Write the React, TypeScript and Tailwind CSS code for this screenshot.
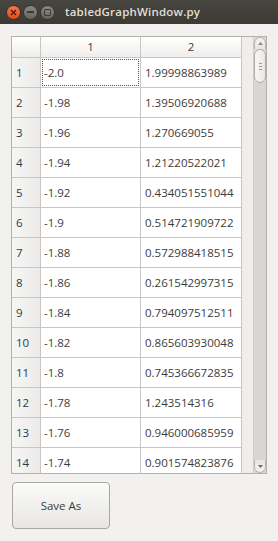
import React from "react";

const rows: [string, string][] = [
    ["-2.0", "1.99998863989"],
    ["-1.98", "1.39506920688"],
    ["-1.96", "1.270669055"],
    ["-1.94", "1.21220522021"],
    ["-1.92", "0.434051551044"],
    ["-1.9", "0.514721909722"],
    ["-1.88", "0.572988418515"],
    ["-1.86", "0.261542997315"],
    ["-1.84", "0.794097512511"],
    ["-1.82", "0.865603930048"],
    ["-1.8", "0.745366672835"],
    ["-1.78", "1.243514316"],
    ["-1.76", "0.946000685959"],
    ["-1.74", "0.901574823876"],
];

const App: React.FC = () => {
    return (
        <div className="w-[278px] h-[541px] bg-[#f2f1f0] flex flex-col overflow-hidden font-['Open_Sans',sans-serif] text-[#3c3c3c]">
            {/* Title bar */}
            <div className="h-[24px] shrink-0 flex items-center bg-gradient-to-b from-[#47463f] to-[#3b3a35] pl-[6px]">
                <div className="w-[15px] h-[15px] rounded-full bg-gradient-to-b from-[#f5784a] to-[#df4a17] border border-[#4a2a1a] flex items-center justify-center">
                    <svg width="7" height="7" viewBox="0 0 7 7">
                        <path d="M1 1 L6 6 M6 1 L1 6" stroke="#4a1e0e" strokeWidth="1.3" />
                    </svg>
                </div>
                <div className="ml-[2px] w-[15px] h-[15px] rounded-full bg-gradient-to-b from-[#8a8984] to-[#65645f] border border-[#35342f] flex items-center justify-center">
                    <div className="w-[7px] h-[2px] bg-[#3c3b37]" />
                </div>
                <div className="ml-[2px] w-[15px] h-[15px] rounded-full bg-gradient-to-b from-[#8a8984] to-[#65645f] border border-[#35342f] flex items-center justify-center">
                    <div className="w-[7px] h-[7px] border-[1.5px] border-[#3c3b37] rounded-[1px]" />
                </div>
                <span className="ml-[10px] text-[11.5px] font-semibold text-[#e0ddd6] tracking-[0.2px]">
                    tabledGraphWindow.py
                </span>
            </div>

            {/* Table */}
            <div className="mt-[12px] ml-[11px] w-[256px] h-[438px] border border-[#b3b1ad] bg-[#efeeec] flex">
                <div className="flex-1 overflow-hidden flex flex-col">
                    {/* Header */}
                    <div className="flex h-[21px] shrink-0">
                        <div className="w-[29px] border-r border-b border-[#c9c7c3] bg-gradient-to-b from-white to-[#efeeec]" />
                        <div className="w-[100px] border-r border-b border-[#c9c7c3] bg-gradient-to-b from-white to-[#efeeec] flex items-center justify-center text-[11.5px]">
                            1
                        </div>
                        <div className="w-[101px] border-r border-b border-[#c9c7c3] bg-gradient-to-b from-white to-[#efeeec] flex items-center justify-center text-[11.5px]">
                            2
                        </div>
                    </div>
                    {rows.map(([a, b], i) => (
                        <div key={i} className="flex h-[30px] shrink-0">
                            <div className="w-[29px] border-r border-b border-[#c9c7c3] bg-gradient-to-r from-[#f6f6f5] to-[#ecebea] flex items-center pl-[4px] text-[11.5px] text-[#2f3a48]">
                                {i + 1}
                            </div>
                            <div className="w-[100px] border-r border-b border-[#c9c7c3] bg-white flex items-stretch">
                                <div
                                    className={
                                        i === 0
                                            ? "flex-1 m-[1px] border border-dotted border-[#555] flex items-center pl-[1px] text-[11.5px]"
                                            : "flex-1 flex items-center pl-[3px] text-[11.5px]"
                                    }
                                >
                                    {a}
                                </div>
                            </div>
                            <div className="w-[101px] border-r border-b border-[#c9c7c3] bg-white flex items-center pl-[4px] text-[11.5px]">
                                {b}
                            </div>
                        </div>
                    ))}
                </div>

                {/* Scrollbar */}
                <div className="w-[13px] shrink-0 bg-[#dcdad6] border-l border-[#cfcdc9] flex flex-col">
                    <div className="h-[12px] rounded-t-full bg-gradient-to-b from-[#f4f3f1] to-[#e6e5e2] border border-[#b9b7b3] border-b-0 flex items-center justify-center">
                        <svg width="5" height="3" viewBox="0 0 5 3">
                            <path d="M0 3 L2.5 0 L5 3 Z" fill="#8a8884" />
                        </svg>
                    </div>
                    <div className="h-[34px] rounded-full bg-gradient-to-r from-[#f7f7f6] to-[#e9e8e5] border border-[#aeaca8] flex flex-col items-center justify-center gap-[2px]">
                        <div className="w-[3px] h-px bg-[#9a9894]" />
                        <div className="w-[3px] h-px bg-[#9a9894]" />
                        <div className="w-[3px] h-px bg-[#9a9894]" />
                    </div>
                    <div className="flex-1 bg-[#d8d6d2]" />
                    <div className="h-[13px] rounded-b-full bg-gradient-to-b from-[#e6e5e2] to-[#f4f3f1] border border-[#b9b7b3] border-t-0 flex items-center justify-center">
                        <svg width="5" height="3" viewBox="0 0 5 3">
                            <path d="M0 0 L2.5 3 L5 0 Z" fill="#6e6c68" />
                        </svg>
                    </div>
                </div>
            </div>

            {/* Save button */}
            <div className="mt-[8px] ml-[12px]">
                <button className="w-[98px] h-[47px] rounded-[4px] border border-[#a9a7a3] bg-gradient-to-b from-[#fbfbfa] to-[#e7e6e3] text-[11.5px] text-[#3c3c3c] shadow-[inset_0_1px_0_#ffffff]">
                    Save As
                </button>
            </div>
        </div>
    );
};

export default App;
